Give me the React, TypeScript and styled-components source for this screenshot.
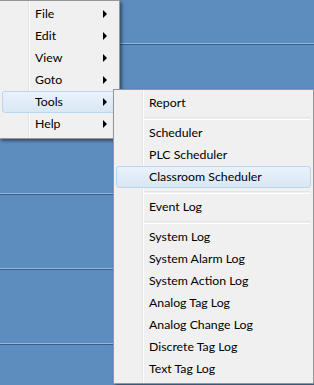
import React from 'react'
import styled, { createGlobalStyle } from 'styled-components'

const GlobalStyle = createGlobalStyle`
  html, body {
    margin: 0;
    padding: 0;
  }
  body {
    font-family: Lato, "Noto Sans", sans-serif;
    font-size: 12.3px;
    color: #000;
  }
`

const Desktop = styled.div`
  position: relative;
  width: 314px;
  height: 385px;
  overflow: hidden;
  background: repeating-linear-gradient(
    to bottom,
    #5d8cbf 0 43px,
    #8cb8ea 43px 44px,
    #3b5f86 44px 45px,
    #5d8cbf 45px 75px
  );
`

const Menu = styled.div<{ $width: number }>`
  position: absolute;
  width: ${(p) => p.$width}px;
  box-sizing: border-box;
  padding: 2px 2px 3px;
  border: 1px solid #979797;
  background-color: #f0f0f0;
  background-image: linear-gradient(
    to right,
    transparent 28px,
    #e2e3e3 28px 29px,
    #ffffff 29px 30px,
    transparent 30px
  );
  box-shadow: 2px 2px 3px rgba(0, 0, 0, 0.45);
  display: flex;
  flex-direction: column;
`

const MainMenu = styled(Menu)`
  left: -1px;
  top: 0;
`

const SubMenu = styled(Menu)`
  left: 110px;
  top: -3px;
  z-index: 2;
`

const Item = styled.div<{ $active?: boolean }>`
  position: relative;
  height: 22px;
  box-sizing: border-box;
  display: flex;
  align-items: center;
  justify-content: space-between;
  padding: 0 9px 0 32px;
  border: 1px solid ${(p) => (p.$active ? '#b8d6f0' : 'transparent')};
  border-radius: 3px;
  background: ${(p) =>
    p.$active ? 'linear-gradient(to bottom, #eaf2fa, #d9e7f4)' : 'transparent'};
  white-space: nowrap;
  line-height: 1;
`

const Arrow = styled.span`
  width: 0;
  height: 0;
  border-top: 4px solid transparent;
  border-bottom: 4px solid transparent;
  border-left: 4px solid #000;
`

const Separator = styled.div`
  height: 8px;
  display: flex;
  align-items: center;
  padding-left: 28px;
  margin-right: 1px;

  &::after {
    content: '';
    flex: 1;
    height: 1px;
    border-top: 1px solid #e2e3e3;
    border-bottom: 1px solid #ffffff;
  }
`

const mainItems = ['File', 'Edit', 'View', 'Goto', 'Tools', 'Help']

const toolItems: (string | null)[] = [
  'Report',
  null,
  'Scheduler',
  'PLC Scheduler',
  'Classroom Scheduler',
  null,
  'Event Log',
  null,
  'System Log',
  'System Alarm Log',
  'System Action Log',
  'Analog Tag Log',
  'Analog Change Log',
  'Discrete Tag Log',
  'Text Tag Log',
]

export default function App() {
  return (
    <>
      <GlobalStyle />
      <Desktop>
        <MainMenu $width={121}>
          {mainItems.map((name) => (
            <Item key={name} $active={name === 'Tools'}>
              <span>{name}</span>
              <Arrow />
              {name === 'Tools' && (
                <SubMenu $width={201}>
                  {toolItems.map((t, i) =>
                    t === null ? (
                      <Separator key={i} />
                    ) : (
                      <Item key={t} $active={t === 'Classroom Scheduler'}>
                        <span>{t}</span>
                      </Item>
                    )
                  )}
                </SubMenu>
              )}
            </Item>
          ))}
        </MainMenu>
      </Desktop>
    </>
  )
}
